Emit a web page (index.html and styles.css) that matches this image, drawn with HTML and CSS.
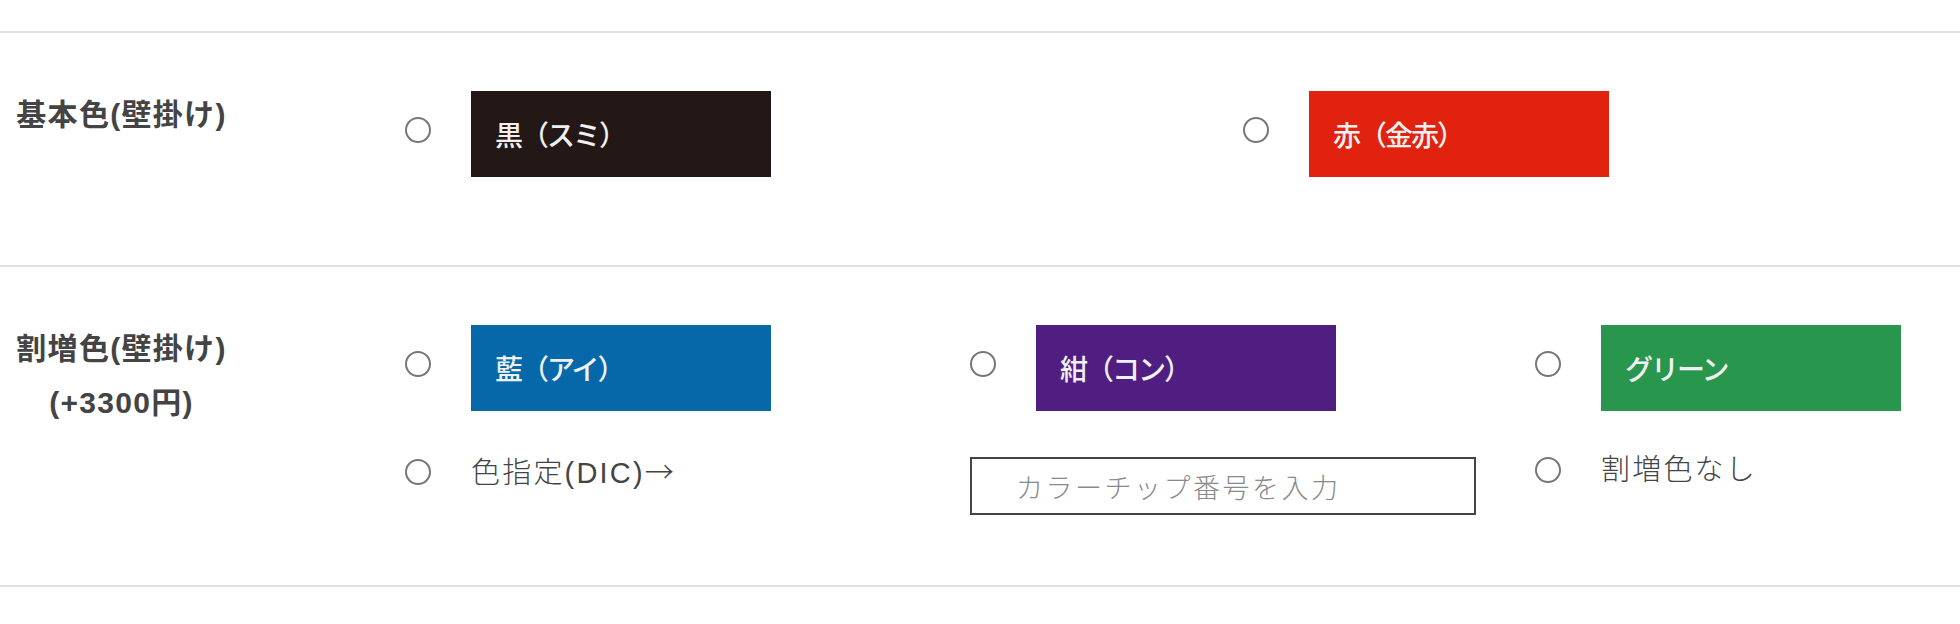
FILE: index.html
```html
<!DOCTYPE html>
<html lang="ja">
<head>
<meta charset="utf-8">
<title>色選択</title>
<link rel="stylesheet" href="styles.css">
</head>
<body>
<div class="table">
  <div class="row row-basic">
    <div class="label">基本色(壁掛け)</div>
    <div class="options options-2">
      <label class="item">
        <input type="radio" name="basic" class="radio radio-swatch">
        <span class="swatch swatch-black">黒（スミ）</span>
      </label>
      <label class="item">
        <input type="radio" name="basic" class="radio radio-swatch">
        <span class="swatch swatch-red">赤（金赤）</span>
      </label>
    </div>
  </div>
  <div class="row row-extra">
    <div class="label">割増色(壁掛け)<br>(+3300円)</div>
    <div class="options options-3">
      <label class="item">
        <input type="radio" name="extra" class="radio radio-swatch">
        <span class="swatch swatch-blue">藍（アイ）</span>
      </label>
      <label class="item">
        <input type="radio" name="extra" class="radio radio-swatch">
        <span class="swatch swatch-purple">紺（コン）</span>
      </label>
      <label class="item">
        <input type="radio" name="extra" class="radio radio-swatch">
        <span class="swatch swatch-green">グリーン</span>
      </label>
      <label class="item item-text">
        <input type="radio" name="extra" class="radio">
        <span class="text">色指定(DIC)<span class="arrow">→</span></span>
      </label>
      <div class="item">
        <input type="text" class="chip-input" placeholder="カラーチップ番号を入力">
      </div>
      <label class="item item-text">
        <input type="radio" name="extra" class="radio">
        <span class="text">割増色なし</span>
      </label>
    </div>
  </div>
</div>
</body>
</html>
```

FILE: styles.css
```css
html, body {
  margin: 0;
  padding: 0;
  background: #ffffff;
  overflow: hidden;
}

body {
  width: 1960px;
  height: 624px;
  font-family: "Liberation Sans", "Noto Sans CJK JP", sans-serif;
  color: #444444;
}

.table {
  margin-top: 31px;
  border-top: 2px solid #e1e2e4;
}

.row {
  display: flex;
  align-items: flex-start;
  border-bottom: 2px solid #e1e2e4;
}

.row-basic {
  padding: 0 0 88px 0;
}

.row-extra {
  padding: 0 0 70px 0;
}

.label {
  flex: 0 0 243px;
  width: 243px;
  padding-top: 55px;
  text-align: center;
  font-size: 30px;
  font-weight: 700;
  line-height: 54px;
  letter-spacing: 1.3px;
  color: #444444;
}

.options {
  display: grid;
  align-items: start;
  padding-left: 162px;
  padding-top: 58px;
  row-gap: 46px;
}

.options-2 {
  grid-template-columns: 838px auto;
}

.options-3 {
  grid-template-columns: 565px 565px auto;
}

.item {
  display: flex;
  align-items: flex-start;
  gap: 40px;
}

.item-text {
  align-items: center;
}

.radio {
  appearance: none;
  -webkit-appearance: none;
  box-sizing: border-box;
  width: 26px;
  height: 26px;
  margin: 0;
  flex: 0 0 26px;
  border: 2px solid #777777;
  border-radius: 50%;
  background: #ffffff;
}

.radio-swatch {
  margin-top: 26px;
}

.swatch {
  box-sizing: border-box;
  display: flex;
  align-items: center;
  width: 300px;
  height: 86px;
  padding-left: 24px;
  font-family: "Noto Sans CJK JP", sans-serif;
  font-size: 28px;
  font-weight: 500;
  color: #f0f0f0;
  letter-spacing: -2px;
}

.swatch-black { background: #231815; }
.swatch-red { background: #e0220f; }
.swatch-blue { background: #0668a9; }
.swatch-purple { background: #501e80; }
.swatch-green { background: #28964c; }

.text {
  font-size: 29px;
  line-height: 26px;
  font-weight: 300;
  letter-spacing: 2.2px;
  color: #444444;
  white-space: nowrap;
}

.arrow {
  font-family: "Noto Sans CJK JP", sans-serif;
  letter-spacing: 0;
}

.chip-input {
  box-sizing: border-box;
  width: 506px;
  height: 58px;
  margin: 0;
  padding: 0 0 0 44px;
  border: 2px solid #444444;
  border-radius: 0;
  background: #ffffff;
  font-family: "Noto Sans CJK JP", sans-serif;
  font-size: 27px;
  font-weight: 300;
  letter-spacing: 2.5px;
  color: #444444;
  outline: none;
}

.chip-input::placeholder {
  color: #8a8a8a;
}
```
